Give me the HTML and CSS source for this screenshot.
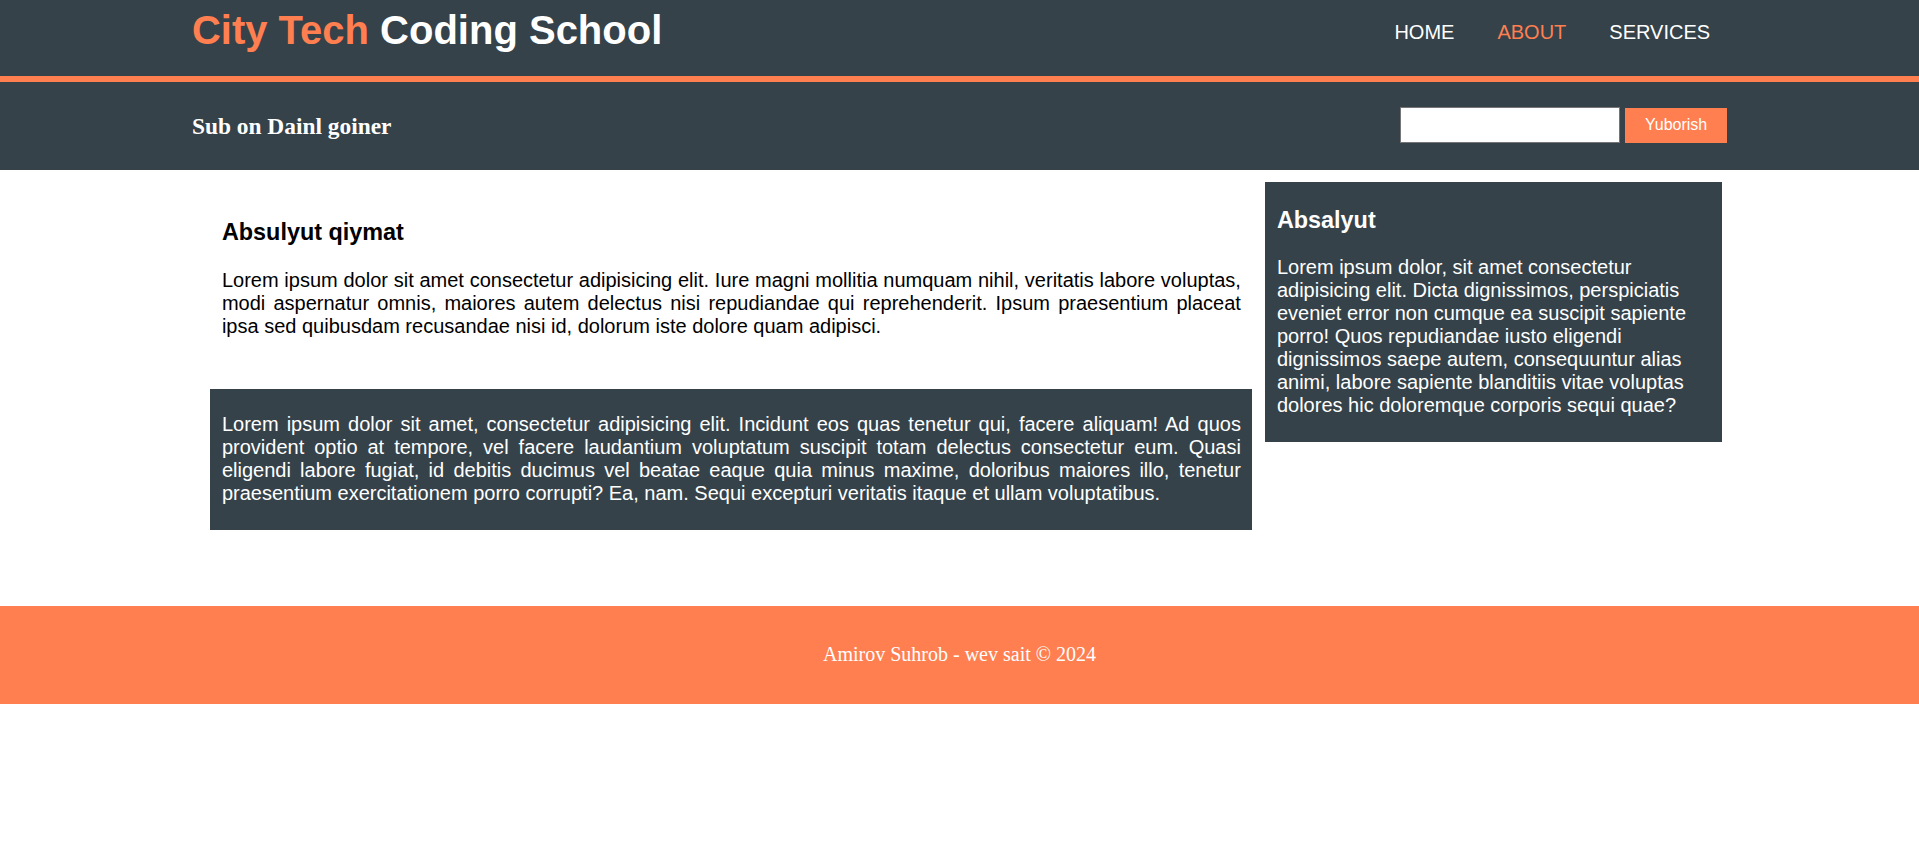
FILE: index.html
```html
<!DOCTYPE html>
<html lang="uz">
<head>
<meta charset="utf-8">
<title>City Tech Coding School</title>
<link rel="stylesheet" href="styles.css">
</head>
<body>
<header class="topbar">
  <div class="container topbar-inner">
    <h1 class="logo"><span class="accent">City Tech</span> Coding School</h1>
    <nav>
      <ul class="nav">
        <li><a href="#">HOME</a></li>
        <li><a href="#" class="current">ABOUT</a></li>
        <li><a href="#">SERVICES</a></li>
      </ul>
    </nav>
  </div>
</header>

<section class="newsletter">
  <div class="container newsletter-inner">
    <h3 class="newsletter-title">Sub on Dainl goiner</h3>
    <form class="subscribe">
      <input type="email" class="subscribe-input">
      <button type="button" class="subscribe-btn">Yuborish</button>
    </form>
  </div>
</section>

<main class="container content">
  <div class="main-col">
    <article class="intro">
      <h3 class="intro-title">Absulyut qiymat</h3>
      <p class="text">Lorem ipsum dolor sit amet consectetur adipisicing elit. Iure magni mollitia numquam nihil, veritatis labore voluptas, modi aspernatur omnis, maiores autem delectus nisi repudiandae qui reprehenderit. Ipsum praesentium placeat ipsa sed quibusdam recusandae nisi id, dolorum iste dolore quam adipisci.</p>
    </article>
    <div class="dark-block">
      <p class="text">Lorem ipsum dolor sit amet, consectetur adipisicing elit. Incidunt eos quas tenetur qui, facere aliquam! Ad quos provident optio at tempore, vel facere laudantium voluptatum suscipit totam delectus consectetur eum. Quasi eligendi labore fugiat, id debitis ducimus vel beatae eaque quia minus maxime, doloribus maiores illo, tenetur praesentium exercitationem porro corrupti? Ea, nam. Sequi excepturi veritatis itaque et ullam voluptatibus.</p>
    </div>
  </div>
  <aside class="sidebar">
    <h3 class="sidebar-title">Absalyut</h3>
    <p class="sidebar-text">Lorem ipsum dolor, sit amet consectetur adipisicing elit. Dicta dignissimos, perspiciatis eveniet error non cumque ea suscipit sapiente porro! Quos repudiandae iusto eligendi dignissimos saepe autem, consequuntur alias animi, labore sapiente blanditiis vitae voluptas dolores hic doloremque corporis sequi quae?</p>
  </aside>
</main>

<footer class="footer">
  <p class="footer-text">Amirov Suhrob - wev sait &copy; 2024</p>
</footer>
</body>
</html>
```

FILE: styles.css
```css
* {
  box-sizing: border-box;
}

body {
  margin: 0;
  font-family: "Liberation Sans", Arial, sans-serif;
  font-size: 20px;
  color: #000;
  background: #fff;
}

.container {
  width: 80%;
  margin: 0 auto;
}

/* Top bar */
.topbar {
  background: #35424a;
  height: 82px;
  border-bottom: 6px solid #ff7f50;
}

.topbar-inner {
  display: flex;
  justify-content: space-between;
  align-items: flex-start;
}

.logo {
  margin: 8px 0 0;
  font-size: 40px;
  font-weight: bold;
  color: #fff;
}

.accent {
  color: #ff7f50;
}

.nav {
  list-style: none;
  display: flex;
  gap: 43px;
  margin: 21px 17px 0 0;
  padding: 0;
}

.nav a {
  color: #fff;
  text-decoration: none;
  font-size: 20px;
}

.nav a.current {
  color: #ff7f50;
}

/* Newsletter bar */
.newsletter {
  background: #35424a;
  height: 88px;
}

.newsletter-inner {
  height: 100%;
  display: flex;
  justify-content: space-between;
  align-items: center;
}

.newsletter-title {
  margin: 0;
  font-family: "Liberation Serif", "Times New Roman", serif;
  font-size: 23.4px;
  font-weight: bold;
  color: #fff;
}

.subscribe {
  display: flex;
  align-items: center;
  gap: 5px;
  margin: 0 0 2px;
}

.subscribe-input {
  width: 220px;
  height: 36px;
  margin: 0;
  padding: 0 4px;
  border: 1px solid #767676;
  background: #fff;
}

.subscribe-btn {
  width: 102px;
  height: 35px;
  margin: 0;
  padding: 0;
  border: none;
  background: #ff7f50;
  color: #fff;
  font-family: "Liberation Sans", Arial, sans-serif;
  font-size: 16px;
}

/* Content */
.content {
  display: flex;
  align-items: flex-start;
  gap: 13px;
  margin-bottom: 76px;
}

.main-col {
  width: 1042px;
  margin-left: 18px;
}

.intro {
  padding: 49px 11px 0 12px;
}

.intro-title {
  margin: 0 0 23px;
  font-size: 23.4px;
  font-weight: bold;
}

.text {
  margin: 0;
  text-align: justify;
}

.dark-block {
  margin-top: 51px;
  padding: 24px 11px 25px 12px;
  background: #35424a;
  color: #fff;
}

.sidebar {
  width: 457px;
  margin-top: 12px;
  margin-right: 5px;
  padding: 25px 12px;
  background: #35424a;
  color: #fff;
}

.sidebar-title {
  margin: 0 0 22px;
  font-size: 23.4px;
  font-weight: bold;
}

.sidebar-text {
  margin: 0;
}

/* Footer */
.footer {
  background: #ff7f50;
  color: #fff;
  text-align: center;
  padding: 36px 0 38px;
}

.footer-text {
  margin: 0;
  font-family: "Liberation Serif", "Times New Roman", serif;
  font-size: 20px;
  line-height: 24px;
}
```
